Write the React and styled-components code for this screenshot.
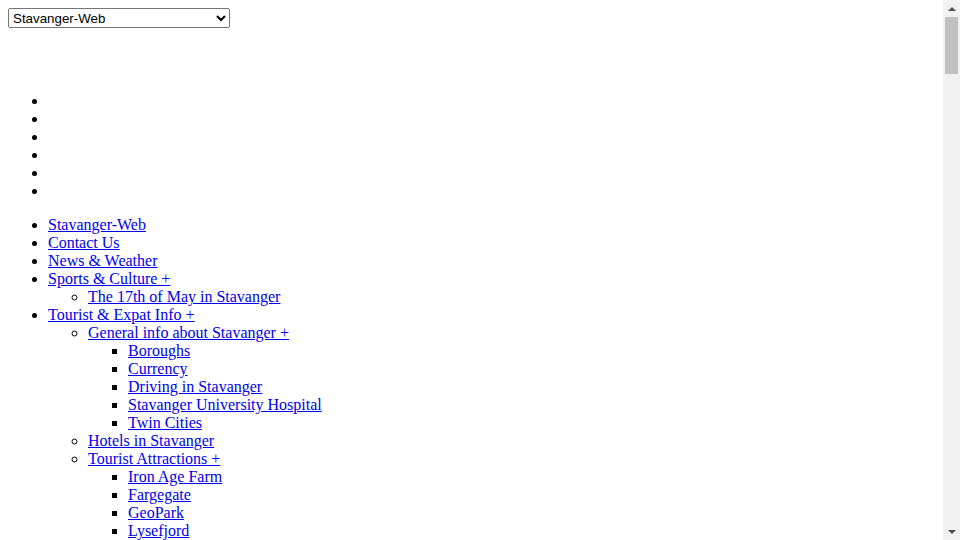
import React from "react";
import styled, { createGlobalStyle } from "styled-components";

const Global = createGlobalStyle`
  html, body { background: #fff; }
  body {
    margin: 8px;
    font-family: "Liberation Serif", "Times New Roman", serif;
    font-size: 16px;
    color: #000;
  }
`;

const SiteSelect = styled.select`
  display: block;
  width: 222px;
  height: 20px;
  font-family: "Liberation Sans", Arial, sans-serif;
  font-size: 13.33px;
  color: #000;
`;

const LogoArea = styled.div`
  height: 48px;
`;

const List = styled.ul`
  margin: ${(p) => (p.$nested ? "0" : "16px 0")};
  padding-left: 40px;
  list-style-type: ${(p) => ["disc", "circle", "square"][p.$level] || "square"};
  line-height: 18px;
`;

const Item = styled.li`
  min-height: 18px;
`;

const NavLink = styled.a`
  color: #0000ee;
  text-decoration: underline;
`;

/* imitation of the browser's scrollbar visible in the screenshot */
const Scrollbar = styled.div`
  position: fixed;
  top: 0;
  right: 0;
  width: 17px;
  height: 100vh;
  background: #f1f1f1;
  display: flex;
  flex-direction: column;
  align-items: center;
`;

const ArrowButton = styled.div`
  width: 17px;
  height: 17px;
  display: flex;
  align-items: center;
  justify-content: center;
  flex: none;
`;

const Track = styled.div`
  flex: 1;
  width: 100%;
  display: flex;
  justify-content: center;
`;

const Thumb = styled.div`
  width: 13px;
  height: 57px;
  background: #c1c1c1;
`;

const menu = [
  ["Stavanger-Web"],
  ["Contact Us"],
  ["News & Weather"],
  ["Sports & Culture +", [["The 17th of May in Stavanger"]]],
  [
    "Tourist & Expat Info +",
    [
      [
        "General info about Stavanger +",
        [["Boroughs"], ["Currency"], ["Driving in Stavanger"], ["Stavanger University Hospital"], ["Twin Cities"]],
      ],
      ["Hotels in Stavanger"],
      ["Tourist Attractions +", [["Iron Age Farm"], ["Fargegate"], ["GeoPark"], ["Lysefjord"]]],
    ],
  ],
];

function Menu({ items, level = 0 }) {
  return (
    <List $level={level} $nested={level > 0}>
      {items.map(([label, children]) => (
        <Item key={label}>
          <NavLink href="#">{label}</NavLink>
          {children && <Menu items={children} level={level + 1} />}
        </Item>
      ))}
    </List>
  );
}

function Arrow({ down }) {
  return (
    <svg width="8" height="4" viewBox="0 0 8 4">
      <path d={down ? "M0 0 H8 L4 4 Z" : "M0 4 H8 L4 0 Z"} fill="#505050" />
    </svg>
  );
}

export default function App() {
  return (
    <>
      <Global />
      <SiteSelect defaultValue="web">
        <option value="web">Stavanger-Web</option>
        <option value="news">News &amp; Weather</option>
        <option value="tourist">Tourist &amp; Expat Info</option>
      </SiteSelect>
      <LogoArea />
      <List $level={0}>
        {[0, 1, 2, 3, 4, 5].map((i) => (
          <Item key={i} />
        ))}
      </List>
      <Menu items={menu} />
      <Scrollbar aria-hidden="true">
        <ArrowButton>
          <Arrow />
        </ArrowButton>
        <Track>
          <Thumb />
        </Track>
        <ArrowButton>
          <Arrow down />
        </ArrowButton>
      </Scrollbar>
    </>
  );
}
